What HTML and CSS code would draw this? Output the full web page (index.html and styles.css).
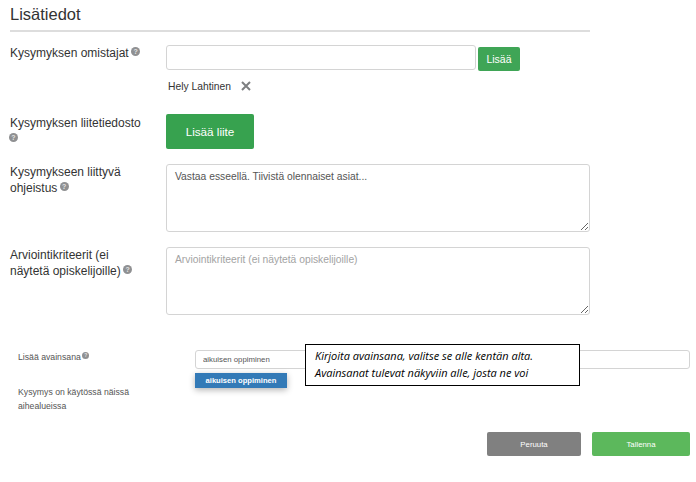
FILE: index.html
```html
<!DOCTYPE html>
<html lang="en">
<head>
  <meta charset="UTF-8">
  <title>Lisätiedot</title>
  <link rel="stylesheet" href="styles.css">
</head>
<body>

  <section class="details">
    <h2>Lisätiedot</h2>

    <div class="row row-owner">
      <label class="label">Kysymyksen omistajat <span class="help">?</span></label>
      <div class="field">
        <div class="owner-input">
          <input type="text" class="input owner-text">
          <button class="btn btn-add">Lisää</button>
        </div>
        <div class="owner">
          Hely Lahtinen
          <svg class="remove" width="10" height="10" viewBox="0 0 10 10">
            <path d="M1 1 L9 9 M9 1 L1 9" stroke="#7d7f81" stroke-width="2" fill="none"/>
          </svg>
        </div>
      </div>
    </div>

    <div class="row row-file">
      <label class="label">Kysymyksen liitetiedosto <span class="help">?</span></label>
      <div class="field">
        <button class="btn btn-file">Lisää liite</button>
      </div>
    </div>

    <div class="row row-text">
      <label class="label">Kysymykseen liittyvä ohjeistus <span class="help">?</span></label>
      <textarea class="input area">Vastaa esseellä. Tiivistä olennaiset asiat...</textarea>
    </div>

    <div class="row row-text">
      <label class="label">Arviointikriteerit (ei näytetä opiskelijoille) <span class="help">?</span></label>
      <textarea class="input area" placeholder="Arviointikriteerit (ei näytetä opiskelijoille)"></textarea>
    </div>
  </section>

  <section class="keywords">
    <div class="keyword-row">
      <label class="small-label">Lisää avainsana <span class="help help-small">?</span></label>
      <div class="keyword-field">
        <input type="text" class="input keyword-input" value="aikuisen oppiminen">
        <div class="dropdown">
          <div class="dropdown-item">aikuisen oppiminen</div>
        </div>
        <div class="note">
          Kirjoita avainsana, valitse se alle kentän alta.<br>
          Avainsanat tulevat näkyviin alle, josta ne voi
        </div>
      </div>
    </div>
    <p class="small-label used">Kysymys on käytössä näissä aihealueissa</p>
  </section>

  <div class="actions">
    <button class="btn btn-cancel">Peruuta</button>
    <button class="btn btn-save">Tallenna</button>
  </div>

</body>
</html>
```

FILE: styles.css
```css
body {
  margin: 0;
  font-family: "Liberation Sans", Arial, sans-serif;
  color: #333;
  background-color: #fff;
}

h2 {
  margin: 0;
  padding: 5px 0 6px;
  height: 19px;
  border-bottom: 2px solid #ddd;
  font-size: 16.5px;
  line-height: 19px;
  font-weight: normal;
}

.details {
  width: 580px;
  margin-left: 10px;
}

.row {
  display: grid;
  grid-template-columns: 156px 424px;
}

.row-owner {
  margin-top: 13px;
}

.row-file {
  margin-top: 21px;
}

.row-text {
  margin-top: 15px;
}

.label {
  width: 138px;
  font-size: 12px;
  line-height: 16px;
}

.row-file .label {
  padding-top: 1px;
}

.help {
  display: inline-block;
  width: 9px;
  height: 9px;
  margin-left: -1px;
  border-radius: 50%;
  background-color: #8f9092;
  color: #e4e4e4;
  font-size: 7px;
  line-height: 9px;
  text-align: center;
  font-weight: bold;
  vertical-align: 3px;
}

.help-small {
  width: 7px;
  height: 7px;
  font-size: 5px;
  line-height: 7px;
}

.input {
  box-sizing: border-box;
  border: 1px solid #d4d4d4;
  border-radius: 3px;
  background-color: #fff;
  font-family: "Liberation Sans", Arial, sans-serif;
  color: #555;
  outline: none;
}

.owner-input {
  display: flex;
  align-items: flex-start;
  gap: 2px;
}

.owner-text {
  width: 310px;
  height: 25px;
}

.btn {
  border: none;
  border-radius: 2px;
  color: #fff;
  font-family: "Liberation Sans", Arial, sans-serif;
  cursor: pointer;
}

.btn-add {
  width: 42px;
  height: 24px;
  margin-top: 2px;
  padding: 0;
  background-color: #3fa556;
  font-size: 10.5px;
}

.owner {
  display: flex;
  align-items: center;
  gap: 10px;
  margin-top: 8px;
  padding-left: 2px;
  height: 14px;
  font-size: 10.3px;
}

.btn-file {
  width: 88px;
  height: 35px;
  padding: 0;
  background-color: #37a24f;
  font-size: 11.7px;
}

.area {
  display: block;
  width: 424px;
  height: 68px;
  padding: 5px 8px;
  font-size: 10.3px;
  line-height: 14px;
}

.area::placeholder {
  color: #a3a3a3;
  opacity: 1;
}

.keywords {
  margin-top: 35px;
  margin-left: 18px;
  width: 672px;
}

.keyword-row {
  display: flex;
}

.small-label {
  margin: 0;
  font-size: 8.7px;
  line-height: 14px;
  color: #555;
}

.keyword-row .small-label {
  width: 177px;
}

.keyword-field {
  position: relative;
  width: 495px;
}

.keyword-input {
  display: block;
  width: 100%;
  height: 19px;
  padding: 0 7px;
  font-size: 7.8px;
}

.dropdown {
  position: absolute;
  left: 0;
  top: 23px;
  width: 92px;
  box-shadow: 0 2px 6px rgba(0, 0, 0, 0.3);
}

.dropdown-item {
  height: 15px;
  background-color: #337ab7;
  color: #fff;
  font-size: 7.6px;
  font-weight: bold;
  line-height: 15px;
  text-align: center;
}

.note {
  position: absolute;
  left: 110px;
  top: -6px;
  box-sizing: border-box;
  width: 275px;
  height: 42px;
  padding: 2px 9px;
  border: 1px solid #000;
  background-color: #fff;
  color: #000;
  font-family: "Open Sans", sans-serif;
  font-size: 11px;
  font-style: italic;
  line-height: 17px;
  white-space: nowrap;
}

.used {
  width: 150px;
  margin-top: 16px;
}

.actions {
  display: flex;
  justify-content: flex-end;
  gap: 11px;
  width: 690px;
  margin-top: 19px;
}

.btn-cancel {
  width: 94px;
  height: 24px;
  padding: 0;
  background-color: #808080;
  font-size: 7.8px;
}

.btn-save {
  width: 98px;
  height: 24px;
  padding: 0;
  background-color: #5cb85c;
  font-size: 7.8px;
}
```
